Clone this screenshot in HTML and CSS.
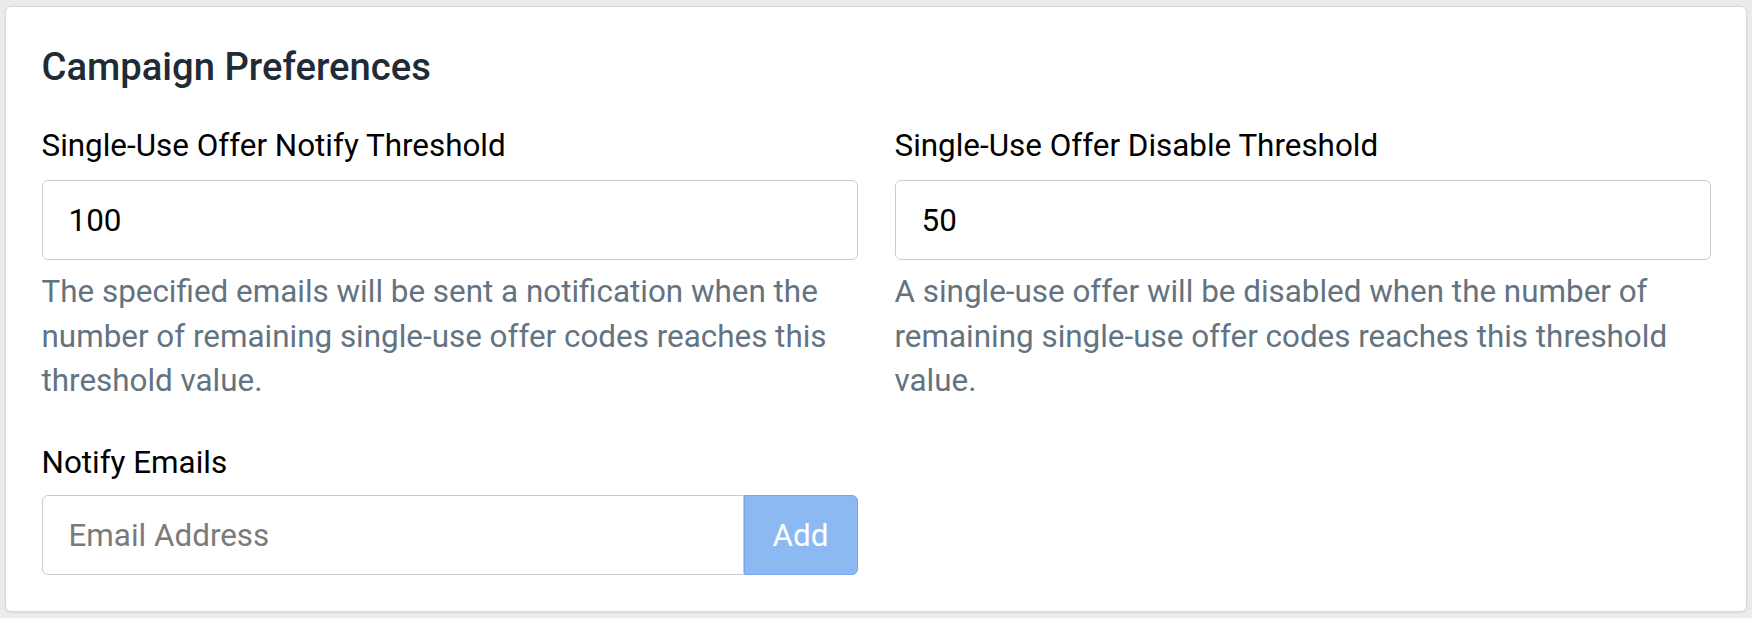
FILE: index.html
```html
<!DOCTYPE html>
<html lang="en">
  <head>
    <meta charset="UTF-8" />
    <meta name="viewport" content="width=device-width, initial-scale=1.0" />
    <title>Campaign Preferences</title>
    <link rel="stylesheet" href="styles.css">
  </head>
  <body>
    <div class="card">
      <h2 class="card-title">Campaign Preferences</h2>

      <div class="form-row">
        <!-- Notify threshold -->
        <div class="form-group">
          <label class="form-label" for="notifyThreshold">Single-Use Offer Notify Threshold</label>
          <input type="number" class="form-control" id="notifyThreshold" value="100" />
          <p class="form-text">
            The specified emails will be sent a notification when the number of
            remaining single-use offer codes reaches this threshold value.
          </p>
        </div>

        <!-- Disable threshold -->
        <div class="form-group">
          <label class="form-label" for="disableThreshold">Single-Use Offer Disable Threshold</label>
          <input type="number" class="form-control" id="disableThreshold" value="50" />
          <p class="form-text">
            A single-use offer will be disabled when the number of remaining
            single-use offer codes reaches this threshold value.
          </p>
        </div>
      </div>

      <div class="form-row form-row-last">
        <div class="form-group">
          <label class="form-label form-label-tight" for="notifyEmail">Notify Emails</label>
          <div class="input-group">
            <input type="email" class="form-control" id="notifyEmail" placeholder="Email Address" />
            <button class="btn btn-add" disabled>Add</button>
          </div>
        </div>
      </div>
    </div>
  </body>
</html>
```

FILE: styles.css
```css
:root {
  --page-bg: #ebebeb;
  --card-border: #d9d9d9;
  --heading: #212b36;
  --text: #000000;
  --muted: #637381;
  --input-border: #c4cdd6;
  --placeholder: #7b7b7b;
  --btn-bg: #8db9f2;
  --btn-border: #72a7ee;
}

* {
  box-sizing: border-box;
}

body {
  margin: 0;
  padding: 6px 5px 7px;
  background: var(--page-bg);
  font-family: Roboto, "Liberation Sans", sans-serif;
  color: var(--text);
}

.card {
  background: #fff;
  border: 1px solid var(--card-border);
  border-radius: 6px;
  padding: 37px 35.5px 35.5px;
  box-shadow: 0 1px 2px rgba(0, 0, 0, 0.08);
}

.card-title {
  margin: 0 0 32.5px;
  font-size: 38.2px;
  font-weight: 500;
  line-height: 46.5px;
  color: var(--heading);
}

.form-row {
  display: grid;
  grid-template-columns: 1fr 1fr;
  gap: 37px;
  margin-bottom: 36.5px;
}

.form-row-last {
  margin-bottom: 0;
}

.form-label {
  display: block;
  font-size: 31.4px;
  line-height: 46.5px;
  margin-bottom: 10.5px;
}

.form-label-tight {
  margin-bottom: 8.5px;
}

.form-control {
  display: block;
  width: 100%;
  height: 80px;
  padding: 0 26px;
  font-family: inherit;
  font-size: 31.4px;
  color: var(--text);
  background: #fff;
  border: 1.5px solid var(--input-border);
  border-radius: 6px;
  outline: none;
  -moz-appearance: textfield;
}

.form-control::-webkit-outer-spin-button,
.form-control::-webkit-inner-spin-button {
  -webkit-appearance: none;
  margin: 0;
}

.form-control::placeholder {
  color: var(--placeholder);
}

.form-text {
  margin: 10px 0 0;
  font-size: 31.4px;
  line-height: 44.5px;
  color: var(--muted);
}

.input-group {
  display: flex;
}

.input-group .form-control {
  flex: 1;
  border-top-right-radius: 0;
  border-bottom-right-radius: 0;
}

.btn {
  font-family: inherit;
  font-size: 31.4px;
  height: 80px;
  padding: 0 28px;
  border-radius: 0 6px 6px 0;
  cursor: pointer;
}

.btn-add {
  background: var(--btn-bg);
  border: 1.5px solid var(--btn-border);
  color: #fff;
}
```
